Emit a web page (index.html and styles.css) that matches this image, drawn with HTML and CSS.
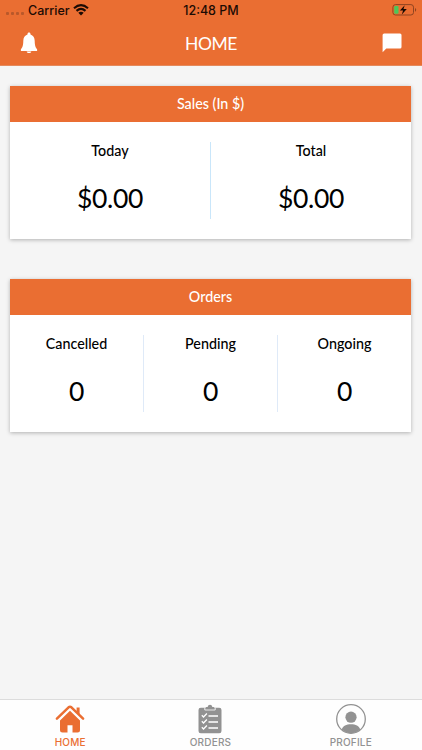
FILE: index.html
```
<!DOCTYPE html>
<html lang="en">
<head>
  <meta charset="UTF-8" />
  <meta name="viewport" content="width=device-width, initial-scale=1.0"/>
  <title>Home</title>
  <link rel="stylesheet" href="styles.css">
</head>
<body>
  <header class="header">
    <div class="status-bar">
      <div class="carrier">
        <span class="signal"><i></i><i></i><i></i><i></i></span>
        <span>Carrier</span>
        <svg class="wifi" width="16" height="12" viewBox="0 0 16 12">
          <path d="M1 4.2Q8-2 15 4.2M3.5 6.9Q8 3 12.5 6.9" fill="none" stroke="#1c0b04" stroke-width="2.1"/>
          <path d="M5.3 8.7Q8 6.6 10.7 8.7L8 11.4Z" fill="#1c0b04"/>
        </svg>
      </div>
      <div class="time">12:48 PM</div>
      <svg class="battery" width="25" height="12" viewBox="0 0 25 12">
        <rect x=".9" y=".6" width="20.6" height="10.4" rx="2.6" fill="none" stroke="#8f4420"/>
        <rect x="2.2" y="1.9" width="4.3" height="7.8" rx="1" fill="#4cc65a"/>
        <path d="M23 4v3.7c1.6-.7 1.6-3 0-3.7z" fill="#8f4420"/>
        <path d="M12.7 1.2 7.9 6.6h3.2l-1.3 4 5-5.6h-3.3z" fill="#140802"/>
      </svg>
    </div>
    <div class="nav-bar">
      <svg class="bell" width="18" height="22" viewBox="0 0 18 22">
        <path d="M9 .5c-.9 0-1.5.7-1.5 1.6v.5C4.8 3.4 3.4 5.8 3.3 8.8 3.2 13.5 2.6 15.6.9 17.2v1.7h16.2v-1.7c-1.7-1.6-2.3-3.7-2.4-8.4-.1-3-1.5-5.4-4.2-6.2v-.5C10.5 1.2 9.9.5 9 .5zM6.700 19.400c.3 2.200 4.300 2.200 4.600 0z" fill="#fff"/>
      </svg>
      <h1>HOME</h1>
      <svg class="chat" width="20" height="20" viewBox="0 0 20 20">
        <path d="M2.200.500h15.800q1.500 0 1.500 1.500v12q0 1.500-1.500 1.500H4.300L.6 19.300V2Q.6.500 2.200.500z" fill="#fff"/>
      </svg>
    </div>
  </header>

  <main class="content">
    <section class="card">
      <h2>Sales (In $)</h2>
      <div class="stats">
        <div class="stat stat-wide">
          <p class="label">Today</p>
          <p class="value">$0.00</p>
        </div>
        <div class="stat">
          <p class="label">Total</p>
          <p class="value">$0.00</p>
        </div>
      </div>
    </section>

    <section class="card">
      <h2>Orders</h2>
      <div class="stats">
        <div class="stat">
          <p class="label">Cancelled</p>
          <p class="value">0</p>
        </div>
        <div class="stat">
          <p class="label">Pending</p>
          <p class="value">0</p>
        </div>
        <div class="stat">
          <p class="label">Ongoing</p>
          <p class="value">0</p>
        </div>
      </div>
    </section>
  </main>

  <nav class="tabs">
    <a class="tab active">
      <svg width="30" height="30" viewBox="0 0 30 30">
        <path d="M1.900 14.700 13.600 3.300q1.400-1.200 2.800 0l11.700 11.400" fill="none" stroke="currentColor" stroke-width="2.500" stroke-linecap="round" stroke-linejoin="round"/>
        <path d="M21.600 3.500h3v7.800l-3-3z" fill="currentColor"/>
        <path d="M15 6.800 5 16.600v9.400q0 2.500 2.500 2.500h5v-7.300h5v7.300h5q2.500 0 2.500-2.500v-9.400z" fill="currentColor"/>
      </svg>
      <span>HOME</span>
    </a>
    <a class="tab">
      <svg width="30" height="30" viewBox="0 0 30 30">
        <path d="M5.800 3.800h4.700c.4-.8 1.500-.8 2.200-.8.300-3 4.300-3 4.600 0 .7 0 1.800 0 2.200.8h4.700q2.300 0 2.300 2.300v20.800q0 2.300-2.300 2.300H5.800q-2.300 0-2.300-2.300V6.100q0-2.300 2.300-2.300z" fill="currentColor"/>
        <path d="M9.800 3.700v2.300h10.400V3.700" fill="none" stroke="#fff" stroke-width=".8"/>
        <path d="m6.800 11.300 1.700 1.700 3.400-3.500M6.800 17.300l1.700 1.700 3.400-3.500M6.800 23.300l1.700 1.700 3.400-3.500M13.500 12h9.500M13.500 18h9.500M13.500 24h9.500" fill="none" stroke="#fff" stroke-width="1.300"/>
      </svg>
      <span>ORDERS</span>
    </a>
    <a class="tab">
      <svg width="30" height="30" viewBox="0 0 30 30">
        <circle cx="15" cy="15" r="14.300" fill="none" stroke="currentColor" stroke-width="1.300"/>
        <circle cx="15" cy="13.200" r="5.600" fill="currentColor"/>
        <path d="M5.600 25.600c1.200-3.600 4.800-5.400 9.400-5.400s8.200 1.800 9.400 5.400c-5.200 4.900-13.600 4.900-18.800 0z" fill="currentColor"/>
      </svg>
      <span>PROFILE</span>
    </a>
  </nav>
</body>
</html>
```

FILE: styles.css
```
* {
  box-sizing: border-box;
}
body {
  margin: 0;
  height: 750px;
  display: flex;
  flex-direction: column;
  background: #f5f5f5;
  font-family: Lato, sans-serif;
  color: #000;
}
h1, h2, p {
  margin: 0;
}
svg {
  display: block;
}
.header {
  height: 66px;
  background: #ea6e32;
  border-bottom: 1px solid #e48a5d;
}
.status-bar {
  display: grid;
  grid-template-columns: 1fr auto 1fr;
  align-items: center;
  height: 20px;
  padding: 0 5px 0 6px;
  font-family: Inter, sans-serif;
  font-size: 12.5px;
  font-weight: 500;
  color: #1c0b04;
}
.carrier {
  display: flex;
  align-items: center;
}
.signal {
  display: flex;
  gap: 2px;
  margin: 7px 4px 0 0;
}
.signal i {
  width: 3px;
  height: 3px;
  border-radius: 1px;
  background: #b9582a;
}
.wifi {
  margin-left: 3px;
}
.time {
  margin-right: 1px;
}
.battery {
  justify-self: end;
}
.nav-bar {
  display: grid;
  grid-template-columns: 1fr auto 1fr;
  align-items: center;
  height: 46px;
  padding: 0 20px;
}
.nav-bar h1 {
  font-size: 17.5px;
  font-weight: 400;
  letter-spacing: -0.4px;
  color: #fff;
}
.chat {
  justify-self: end;
}
.content {
  flex: 1;
  padding: 20px 11px 20px 10px;
}
.card {
  height: 152.5px;
  margin-bottom: 40.5px;
  background: #fff;
  box-shadow: 0 1px 4px rgba(0, 0, 0, 0.28);
}
.card h2 {
  height: 35.5px;
  line-height: 36px;
  background: #ea6e32;
  color: #fff;
  font-size: 14.3px;
  font-weight: 500;
  text-align: center;
}
.stats {
  display: flex;
  padding: 20px 0;
}
.stat {
  flex: 1;
  height: 77px;
  text-align: center;
}
.stat + .stat {
  border-left: 1px solid #dfeaf8;
}
.stat-wide + .stat {
  border-left: 1px solid #c9e6fa;
}
.label {
  font-size: 14.3px;
  font-weight: 500;
  line-height: 17px;
}
.value {
  margin-top: 21px;
  font-size: 26.5px;
  line-height: 36px;
  letter-spacing: -0.3px;
}
.tabs {
  display: flex;
  height: 51px;
  padding-right: 1px;
  background: #fefefe;
  border-top: 1px solid #dcdcdc;
}
.tab {
  flex: 1;
  display: flex;
  flex-direction: column;
  align-items: center;
  padding-top: 4px;
  color: #929292;
  font-family: Inter, sans-serif;
  font-size: 10px;
  font-weight: 500;
  letter-spacing: 0.2px;
  line-height: 16px;
}
.tab.active {
  color: #ea6e32;
}
```
